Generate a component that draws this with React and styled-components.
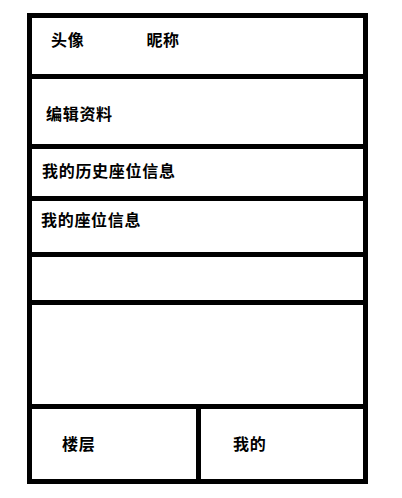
import React from "react";
import styled, { createGlobalStyle } from "styled-components";

const Global = createGlobalStyle`
  *, *::before, *::after { box-sizing: border-box; }
  html, body { margin: 0; padding: 0; background: #fff; }
  body { font-family: "Noto Sans CJK SC", "Noto Sans", sans-serif; color: #000; }
`;

const Frame = styled.div`
  margin: 13px 0 0 27px;
  width: 341px;
  border: 5px solid #000;
  display: flex;
  flex-direction: column;
`;

const Row = styled.div`
  height: ${(p) => p.$h}px;
  border-bottom: 5px solid #000;
  padding: ${(p) => p.$pt || 0}px 0 0 ${(p) => p.$pl || 0}px;
  display: flex;
  align-items: flex-start;
  gap: ${(p) => p.$gap || 0}px;
`;

const Label = styled.span`
  font-size: 16px;
  line-height: 16px;
  font-weight: 700;
  letter-spacing: 0.7px;
  white-space: nowrap;
`;

const TabBar = styled.div`
  height: 70px;
  display: grid;
  grid-template-columns: 164px 1fr;
`;

const Tab = styled.div`
  padding: ${(p) => p.$pt}px 0 0 ${(p) => p.$pl}px;
  border-left: ${(p) => (p.$divider ? "5px solid #000" : "none")};
`;

export default function App() {
  return (
    <>
      <Global />
      <Frame>
        <Row $h={61} $pt={13} $pl={19} $gap={62}>
          <Label>头像</Label>
          <Label>昵称</Label>
        </Row>
        <Row $h={70} $pt={26} $pl={14}>
          <Label>编辑资料</Label>
        </Row>
        <Row $h={52} $pt={13} $pl={10}>
          <Label>我的历史座位信息</Label>
        </Row>
        <Row $h={56} $pt={10} $pl={9}>
          <Label>我的座位信息</Label>
        </Row>
        <Row $h={48} />
        <Row $h={104} />
        <TabBar>
          <Tab $pt={22} $pl={30}>
            <Label>楼层</Label>
          </Tab>
          <Tab $divider $pt={22} $pl={32}>
            <Label>我的</Label>
          </Tab>
        </TabBar>
      </Frame>
    </>
  );
}
